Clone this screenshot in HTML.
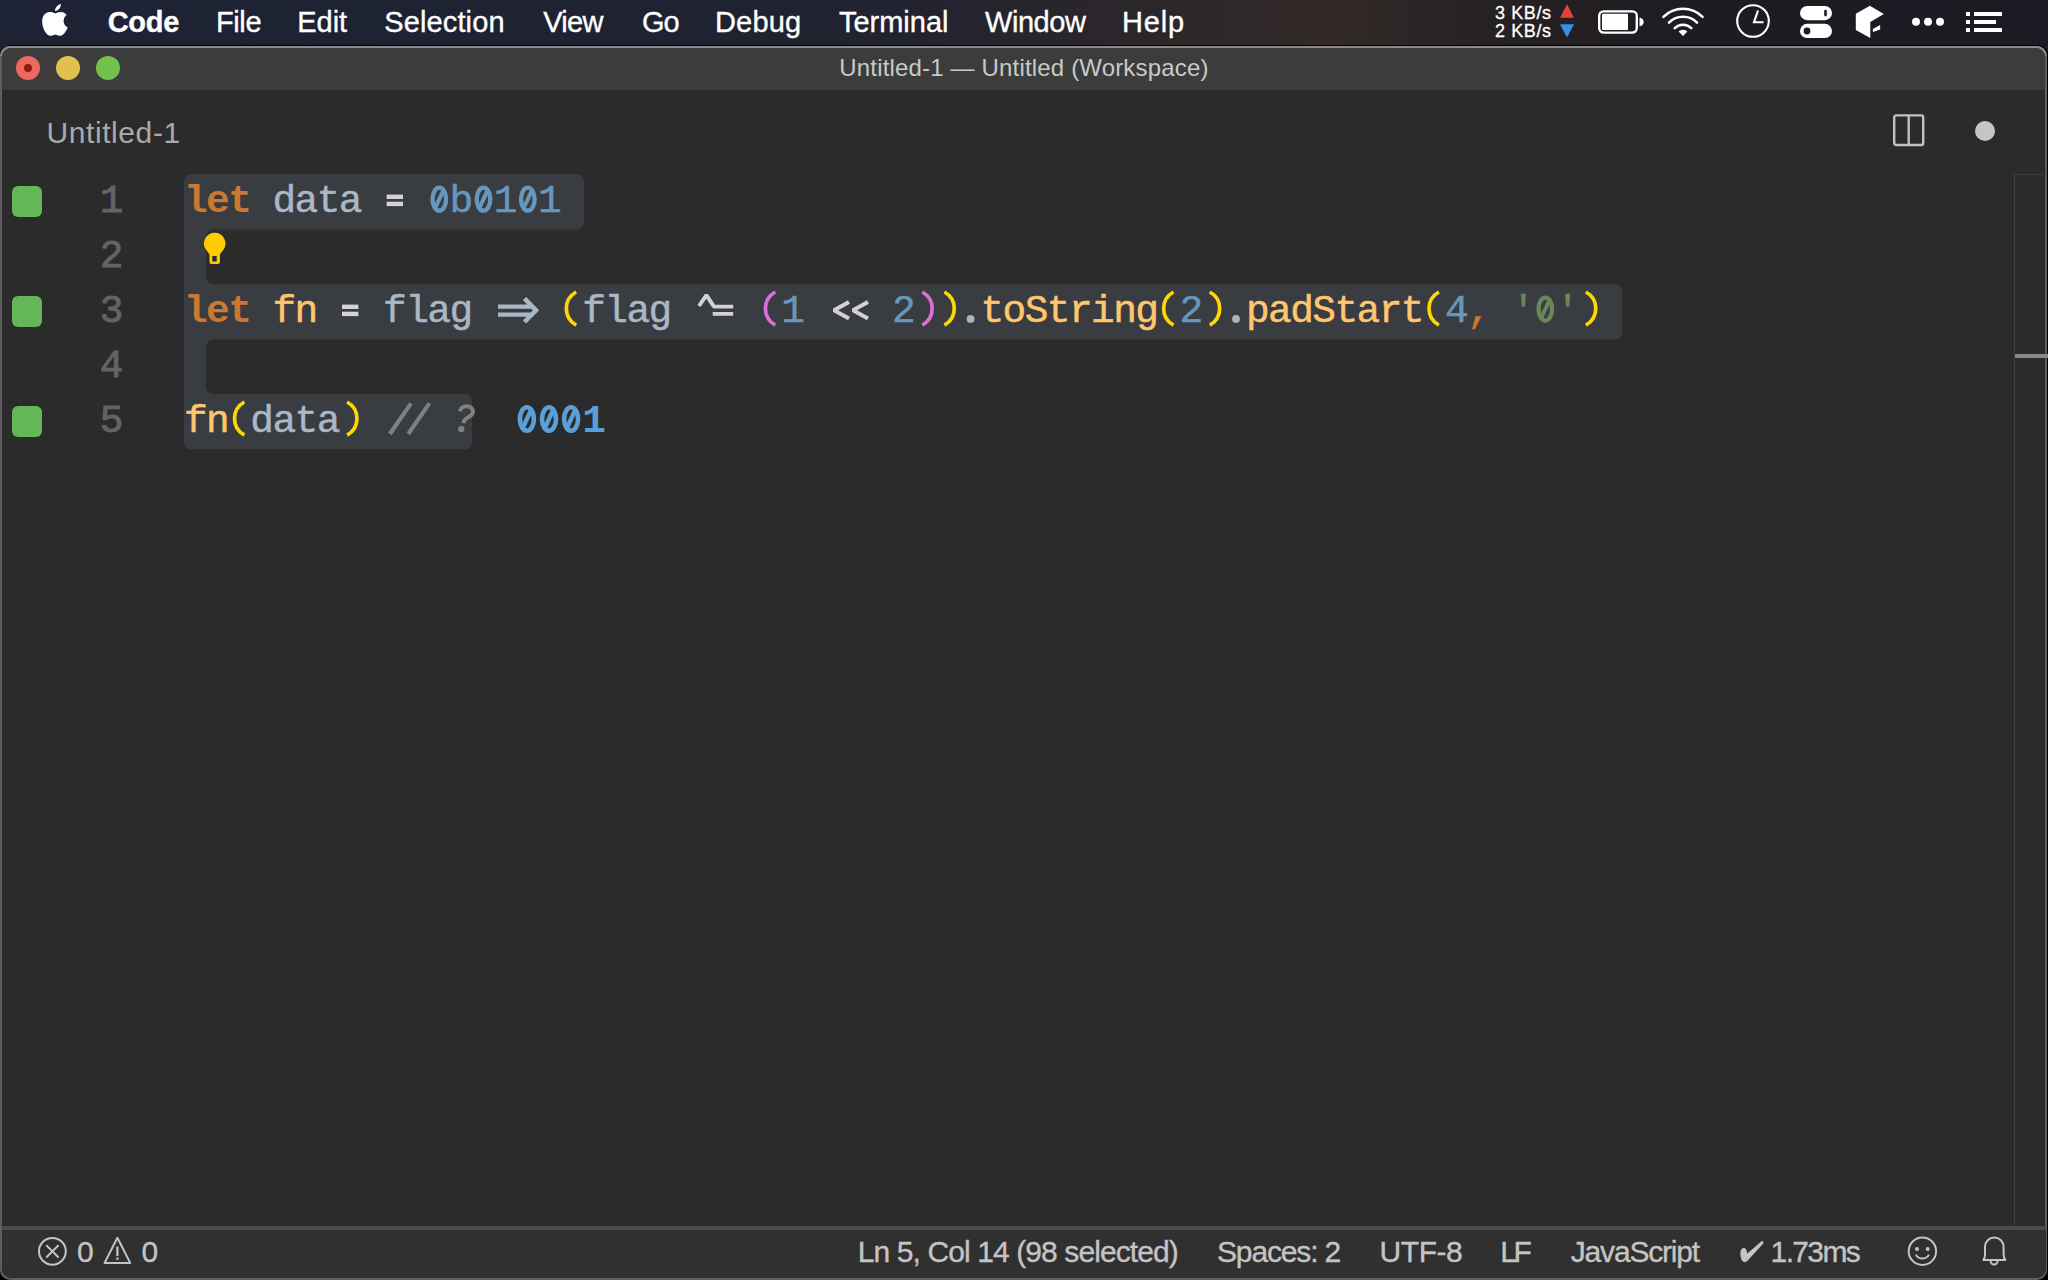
<!DOCTYPE html>
<html><head><meta charset="utf-8">
<style>
*{margin:0;padding:0;box-sizing:border-box}
html,body{width:2048px;height:1280px;overflow:hidden;background:#1d2232}
body{position:relative;font-family:"Liberation Sans",sans-serif}
.a{position:absolute}
#menubar{left:0;top:0;width:2048px;height:46px;background:linear-gradient(90deg,#1d2335 0%,#1e2231 30%,#232330 45%,#2d2728 58%,#332a28 65%,#2a2425 70%,#252022 74%,#1e1c22 83%,#1b1b23 92%,#1a1b24 100%)}
.mi{position:absolute;top:0;height:44px;line-height:44px;color:#fff;font-size:29px;white-space:nowrap;-webkit-text-stroke:0.35px #fff}
.tl{position:absolute;width:24px;height:24px;border-radius:50%}
.code{position:absolute;left:184px;font-family:"Liberation Mono",monospace;font-size:39.5px;letter-spacing:-1.58px;height:55px;line-height:55px;white-space:pre;color:#a9b7c6;-webkit-text-stroke:0.5px currentColor}
.code b{font-weight:bold;-webkit-text-stroke:0}
.ln{position:absolute;left:61.5px;width:62px;text-align:right;font-family:"Liberation Mono",monospace;font-size:39.5px;height:55px;line-height:55px;color:#616467;-webkit-text-stroke:0.9px #616467}
.gm{position:absolute;left:12px;width:30px;height:31px;border-radius:6px;background:#64b658}
.sb{position:absolute;top:1228px;height:48px;line-height:48px;color:#c4c4c4;font-size:30px;white-space:nowrap;-webkit-text-stroke:0.35px #c4c4c4}
.ic{position:absolute}
</style></head><body>
<div id="menubar" class="a"></div>
<!-- apple logo -->
<svg class="a" style="left:0;top:0" width="80" height="44" viewBox="0 0 80 44">
<path fill="#fff" d="M55.3 13.4C53.5 12.4 51.5 11.8 49.5 12C45 12.4 42.2 16 42.2 21.5C42.2 27 45 33 48 35C50 36.4 52 35.6 55.3 34.4C58.6 35.6 60.6 36.4 62.5 35C64.8 33.3 66.8 30 67.7 27.5C65 26.3 63.5 23.6 63.6 20.8C63.7 18 65 16.2 66.6 15C65 12.8 62.8 11.8 60.6 12C58.6 12.1 57 12.7 55.3 13.4Z"/>
<path fill="#fff" d="M55 10.9C55 7.5 57.5 4.6 60.9 3.9C61 7.3 58.5 10.5 55 10.9Z"/>
</svg>
<div class="mi" style="left:107.7px;letter-spacing:-0.29px;font-weight:bold">Code</div>
<div class="mi" style="left:215.9px;letter-spacing:-0.37px">File</div>
<div class="mi" style="left:297.3px;letter-spacing:-0.07px">Edit</div>
<div class="mi" style="left:384.3px;letter-spacing:0.12px">Selection</div>
<div class="mi" style="left:543.2px;letter-spacing:-0.73px">View</div>
<div class="mi" style="left:642px;letter-spacing:-1.0px">Go</div>
<div class="mi" style="left:715px;letter-spacing:0.17px">Debug</div>
<div class="mi" style="left:839px;letter-spacing:-0.02px">Terminal</div>
<div class="mi" style="left:985px;letter-spacing:-0.44px">Window</div>
<div class="mi" style="left:1122px;letter-spacing:0.8px">Help</div>
<!-- menubar extras -->
<div class="a" style="left:1495px;top:4.8px;font-size:18px;line-height:17.7px;color:#fff;white-space:nowrap;letter-spacing:0.6px;-webkit-text-stroke:0.3px #fff">3 KB/s<br>2 KB/s</div>
<svg class="a" style="left:0;top:0" width="2048" height="44" viewBox="0 0 2048 44">
<path d="M1567 4.3L1574 17.7H1560Z" fill="#e2443c"/>
<path d="M1560 24.2H1574L1567 37.6Z" fill="#3b8fe8"/>
<rect x="1599.2" y="11.4" width="37.6" height="21.2" rx="4.5" fill="none" stroke="#fff" stroke-width="2.4"/>
<rect x="1602" y="13.8" width="26" height="16.2" rx="1" fill="#fff"/>
<path d="M1639.5 17.8a4.2 4.2 0 0 1 0 8.4z" fill="#fff"/>
<g fill="none" stroke="#fff" stroke-width="2.6" stroke-linecap="round">
<path d="M1663.4 16.9A27.7 27.7 0 0 1 1702.6 16.9"/>
<path d="M1669 22.6A19.7 19.7 0 0 1 1697 22.6"/>
<path d="M1674.7 28.2A11.8 11.8 0 0 1 1691.3 28.2"/>
</g>
<path d="M1683 36L1678.6 31.6A6.2 6.2 0 0 1 1687.4 31.6Z" fill="#fff"/>
<circle cx="1753" cy="21" r="15.8" fill="none" stroke="#fff" stroke-width="2.1"/>
<path d="M1758 10.5L1754 22.2H1763.5" fill="none" stroke="#fff" stroke-width="2.1"/>
<rect x="1800" y="6" width="32" height="14.2" rx="7.1" fill="#fff"/>
<rect x="1824.2" y="9.8" width="2.6" height="6.6" rx="1.3" fill="#1b1c24"/>
<rect x="1800" y="23.8" width="32" height="14.2" rx="7.1" fill="#fff"/>
<circle cx="1807" cy="31" r="3.4" fill="#1b1c24"/>
<path d="M1869.9 5.8L1883.8 13.9L1870.3 22V38.1L1855.8 29.9V13.7Z" fill="#fff"/>
<path d="M1872.9 28.9L1880.1 25.1V29.4L1872.9 32.1Z" fill="#fff"/>
<circle cx="1916" cy="21.7" r="4" fill="#fff"/>
<circle cx="1928" cy="21.7" r="4" fill="#fff"/>
<circle cx="1940" cy="21.7" r="4" fill="#fff"/>
<rect x="1966" y="12" width="4" height="4" fill="#fff"/>
<rect x="1966" y="20" width="4" height="4" fill="#fff"/>
<rect x="1966" y="28" width="4" height="4" fill="#fff"/>
<rect x="1974" y="12" width="28" height="4" fill="#fff"/>
<rect x="1974" y="20" width="22" height="4" fill="#fff"/>
<rect x="1974" y="28" width="28" height="4" rx="0.5" fill="#fff"/>
</svg>

<!-- window -->
<div class="a" style="left:-1px;top:44.5px;width:2050px;height:1240px;border-radius:12px 12px 0 0;background:#000"></div>
<div class="a" style="left:0;top:46px;width:2047px;height:1234px;border-radius:10px;background:#5e5e5e;overflow:hidden">
  <div class="a" style="left:0;top:0;width:2047px;height:10px;background:#8a8a8a"></div>
  <div class="a" style="left:2px;top:2px;width:2043px;height:1230px;border-radius:9px;background:#2b2b2b;overflow:hidden">
    <div class="a" style="left:0;top:0;width:2043px;height:42px;background:#3c3c3c"></div>
  </div>
</div>
<!-- traffic lights -->
<div class="tl" style="left:16px;top:56px;background:#ee6a5e"></div>
<div class="a" style="left:24px;top:64px;width:8px;height:8px;border-radius:50%;background:#8e1a10"></div>
<div class="tl" style="left:56px;top:56px;background:#e1c14e"></div>
<div class="tl" style="left:96px;top:56px;background:#73c04a"></div>
<div class="a" style="left:839.3px;top:46.7px;height:42px;line-height:42px;color:#c9c9c9;font-size:24px;letter-spacing:0.17px;white-space:nowrap">Untitled-1 — Untitled (Workspace)</div>
<!-- tab -->
<div class="a" style="left:46.4px;top:111.3px;height:44px;line-height:44px;color:#a9a9a9;font-size:30px;letter-spacing:0.6px;white-space:nowrap">Untitled-1</div>
<!-- split icon -->
<svg class="a" style="left:1890px;top:111px" width="38" height="38" viewBox="0 0 38 38"><rect x="4.2" y="4.4" width="29" height="29.6" rx="2" fill="none" stroke="#c2c2c2" stroke-width="2.4"/><line x1="18.7" y1="4" x2="18.7" y2="34" stroke="#c2c2c2" stroke-width="2.4"/></svg>
<div class="a" style="left:1975.4px;top:121.2px;width:20px;height:20px;border-radius:50%;background:#c5c5c5"></div>
<!-- overview ruler -->
<div class="a" style="left:2014px;top:174px;width:1px;height:1052px;background:#3e3e3e"></div>
<div class="a" style="left:2014px;top:174px;width:32px;height:1px;background:#3e3e3e"></div>
<div class="a" style="left:2015px;top:354px;width:33px;height:4px;background:#888"></div>
<!-- selection -->
<svg class="a" style="left:0;top:0" width="2048" height="1280" viewBox="0 0 2048 1280"><path d="M184,181 A7,7 0 0 1 191,174 H577 A7,7 0 0 1 584,181 V222.6 A7,7 0 0 1 577,229.6 H213 A7,7 0 0 0 206,236.6 V277 A7,7 0 0 0 213,284 H1615 A7,7 0 0 1 1622,291 V332.6 A7,7 0 0 1 1615,339.6 H213 A7,7 0 0 0 206,346.6 V387 A7,7 0 0 0 213,394 H465 A7,7 0 0 1 472,401 V442.3 A7,7 0 0 1 465,449.3 H191 A7,7 0 0 1 184,442.3 Z" fill="#393c41"/></svg>
<!-- gutter marks -->
<div class="gm" style="top:186px"></div>
<div class="gm" style="top:296px"></div>
<div class="gm" style="top:406px"></div>
<!-- line numbers -->
<div class="ln" style="top:174px">1</div>
<div class="ln" style="top:229px">2</div>
<div class="ln" style="top:284px">3</div>
<div class="ln" style="top:339px">4</div>
<div class="ln" style="top:394px">5</div>
<!-- code -->
<div class="code" style="top:174px"><b style="color:#cc7832">let</b> data   <span style="color:#6897bb"> b 1 1</span></div>
<div class="code" style="top:284px"><b style="color:#cc7832">let</b> <span style="color:#ffc66d">fn</span>   flag     flag     <span style="color:#6897bb">1</span>    <span style="color:#6897bb">2</span>   <span style="color:#ffc66d">toString</span> <span style="color:#6897bb">2</span>  <span style="color:#ffc66d">padStart</span> <span style="color:#6897bb">4</span><span style="color:#cc7832">,</span> <span style="color:#6a8759">' '</span> </div>
<div class="code" style="top:394px"><span style="color:#ffc66d">fn</span> data           <b style="color:#5a9fd8">1</b></div>
<!-- ligatures -->
<svg class="a" style="left:480px;top:284px" width="400" height="56" viewBox="480 284 400 56">
<g fill="none" stroke-linecap="butt">
<path d="M498 306.6H532M498 314.6H532" stroke="#a9b7c6" stroke-width="4.4"/>
<path d="M524.5 298.5L536 310.3L524.5 322" stroke="#a9b7c6" stroke-width="4.6" stroke-linejoin="miter"/>
<path d="M699 306L706.4 295.2L714 306.6H733.2M712.7 313.9H733.2" stroke="#d2d2d2" stroke-width="3.9" stroke-linejoin="bevel"/>
<path d="M849 302L834 310.3L849 318.6M868 302L853 310.3L868 318.6" stroke="#d2d2d2" stroke-width="4" stroke-linejoin="bevel"/>
</g></svg>
<svg class="a" style="left:380px;top:398px" width="60" height="42" viewBox="380 398 60 42"><path d="M389.8 434L411 403.4M408.2 434L429.4 403.4" stroke="#808080" stroke-width="4.1"/></svg>
<svg class="a" style="left:440px;top:398px" width="50" height="42" viewBox="440 398 50 42"><path d="M459.6 411.2C461.2 407.6 464.3 406.1 467 406.3C471.4 406.6 473.6 409.4 472.8 412.7C472 415.8 468 417 466 418.8C464.5 420.1 463.6 421.4 463.3 423.3" fill="none" stroke="#808080" stroke-width="4"/><circle cx="461.3" cy="429.1" r="3.2" fill="#808080"/></svg>
<svg class="a" style="left:0;top:0" width="420" height="330" viewBox="0 0 420 330" fill="#d4d4d4"><rect x="386.6" y="194.6" width="16.4" height="4.4"/><rect x="386.6" y="201.7" width="16.4" height="4.4"/><rect x="342" y="304.6" width="16.4" height="4.4"/><rect x="342" y="311.7" width="16.4" height="4.4"/></svg>
<svg class="a" style="left:0;top:0" width="1700" height="460" viewBox="0 0 1700 460" fill="none"><ellipse cx="439.3" cy="199.2" rx="6.8" ry="11.5" stroke="#6897bb" stroke-width="4.3"/><path d="M435.5 207.2L443.1 191.2" stroke="#6897bb" stroke-width="4"/><ellipse cx="483.5" cy="199.2" rx="6.8" ry="11.5" stroke="#6897bb" stroke-width="4.3"/><path d="M479.7 207.2L487.3 191.2" stroke="#6897bb" stroke-width="4"/><ellipse cx="527.8" cy="199.2" rx="6.8" ry="11.5" stroke="#6897bb" stroke-width="4.3"/><path d="M524.0 207.2L531.6 191.2" stroke="#6897bb" stroke-width="4"/><ellipse cx="1545.3" cy="309.1" rx="6.8" ry="11.5" stroke="#6a8759" stroke-width="4.3"/><path d="M1541.5 317.1L1549.1 301.1" stroke="#6a8759" stroke-width="4"/><ellipse cx="526.9" cy="419.0" rx="7" ry="11.7" stroke="#5a9fd8" stroke-width="4.6"/><path d="M523.1 427.2L530.7 410.8" stroke="#5a9fd8" stroke-width="4.4"/><ellipse cx="549.0" cy="419.0" rx="7" ry="11.7" stroke="#5a9fd8" stroke-width="4.6"/><path d="M545.2 427.2L552.8 410.8" stroke="#5a9fd8" stroke-width="4.4"/><ellipse cx="571.1" cy="419.0" rx="7" ry="11.7" stroke="#5a9fd8" stroke-width="4.6"/><path d="M567.3 427.2L574.9 410.8" stroke="#5a9fd8" stroke-width="4.4"/></svg>
<svg class="a" style="left:0;top:0" width="1700" height="460" viewBox="0 0 1700 460" fill="none" stroke-width="3.7"><path d="M576.2 292.0A18.9 18.9 0 0 0 576.2 325.2" stroke="#ffd700"/><path d="M775.3 292.0A18.9 18.9 0 0 0 775.3 325.2" stroke="#da70d6"/><path d="M922.3 292.0A18.9 18.9 0 0 1 922.3 325.2" stroke="#da70d6"/><path d="M944.4 292.0A18.9 18.9 0 0 1 944.4 325.2" stroke="#ffd700"/><path d="M1173.5 292.0A18.9 18.9 0 0 0 1173.5 325.2" stroke="#ffd700"/><path d="M1209.8 292.0A18.9 18.9 0 0 1 1209.8 325.2" stroke="#ffd700"/><path d="M1438.9 292.0A18.9 18.9 0 0 0 1438.9 325.2" stroke="#ffd700"/><path d="M1585.9 292.0A18.9 18.9 0 0 1 1585.9 325.2" stroke="#ffd700"/><path d="M244.4 402.0A18.9 18.9 0 0 0 244.4 435.2" stroke="#ffd700"/><path d="M347.1 402.0A18.9 18.9 0 0 1 347.1 435.2" stroke="#ffd700"/></svg>
<svg class="a" style="left:900px;top:300px" width="400" height="30" viewBox="900 300 400 30" fill="#aab6c6"><circle cx="970.6" cy="318.9" r="3.9"/><circle cx="1236" cy="318.9" r="3.9"/></svg>
<!-- lightbulb -->
<svg class="a" style="left:202px;top:230px" width="26" height="36" viewBox="0 0 26 36"><path fill="#ffcc00" d="M12.7 2.8a10.7 10.7 0 0 0-8.8 16.8l3.6 5V32a2 2 0 0 0 2 2h6.4a2 2 0 0 0 2-2v-7.4l3.6-5A10.7 10.7 0 0 0 12.7 2.8z"/><rect x="10.3" y="26" width="4.4" height="5.5" fill="#2b2b2b"/></svg>
<!-- status bar -->
<div class="a" style="left:2px;top:1226px;width:2044px;height:4px;background:#4b4b4b"></div>
<div class="a" style="left:2px;top:1230px;width:2044px;height:48px;background:#303030;border-radius:0 0 9px 9px"></div>
<svg class="a" style="left:0;top:1226px" width="2048" height="54" viewBox="0 1226 2048 54">
<g fill="none" stroke="#c5c5c5" stroke-width="2">
<circle cx="52.4" cy="1251.3" r="13.4"/>
<path d="M46.2 1245.1L58.6 1257.5M58.6 1245.1L46.2 1257.5"/>
<path d="M117.4 1237.8L130.2 1262.9H104.6Z" stroke-linejoin="round"/>
<circle cx="1922.4" cy="1251.2" r="13.7"/>
<path d="M1915.8 1254.6A7.5 7.5 0 0 0 1929 1254.6"/>
<path d="M1983.4 1260H2005.4C2004 1258.5 2003.6 1256.5 2003.6 1254V1246.8A9.3 9.3 0 0 0 1985 1246.8V1254C1985 1256.5 1984.8 1258.5 1983.4 1260Z" stroke-linejoin="round"/>
<path d="M1990.6 1261A3.5 3.5 0 0 0 1997.6 1261"/>
</g>
<rect x="116.3" y="1246.5" width="2.2" height="9.5" fill="#c5c5c5"/>
<rect x="116.3" y="1257.5" width="2.2" height="2.3" fill="#c5c5c5"/>
<path fill="#c5c5c5" d="M1762.8 1241.2C1763.6 1241.6 1763.7 1243 1762.8 1244L1747.5 1260.7C1746.2 1262 1744.5 1262.6 1743.4 1261.8C1741.6 1260.8 1740.6 1258 1740.4 1254C1740.2 1250.5 1741.2 1248.1 1743.6 1247.9C1745.6 1247.8 1746.8 1249.5 1747.3 1253.6L1761 1241.8C1761.5 1241.2 1762.2 1241 1762.8 1241.2Z"/>
<circle cx="1917" cy="1249.1" r="2" fill="#c5c5c5"/>
<circle cx="1927.7" cy="1249.1" r="2" fill="#c5c5c5"/>
</svg>
<div class="sb" style="left:77px">0</div>
<div class="sb" style="left:141.6px">0</div>
<div class="sb" style="left:857.8px;letter-spacing:-0.9px">Ln 5, Col 14 (98 selected)</div>
<div class="sb" style="left:1217px;letter-spacing:-1.15px">Spaces: 2</div>
<div class="sb" style="left:1379.6px;letter-spacing:-0.45px">UTF-8</div>
<div class="sb" style="left:1500.2px;letter-spacing:-3.4px">LF</div>
<div class="sb" style="left:1570.8px;letter-spacing:-1.19px">JavaScript</div>
<div class="sb" style="left:1770.6px;letter-spacing:-1.65px">1.73ms</div>
</body></html>
